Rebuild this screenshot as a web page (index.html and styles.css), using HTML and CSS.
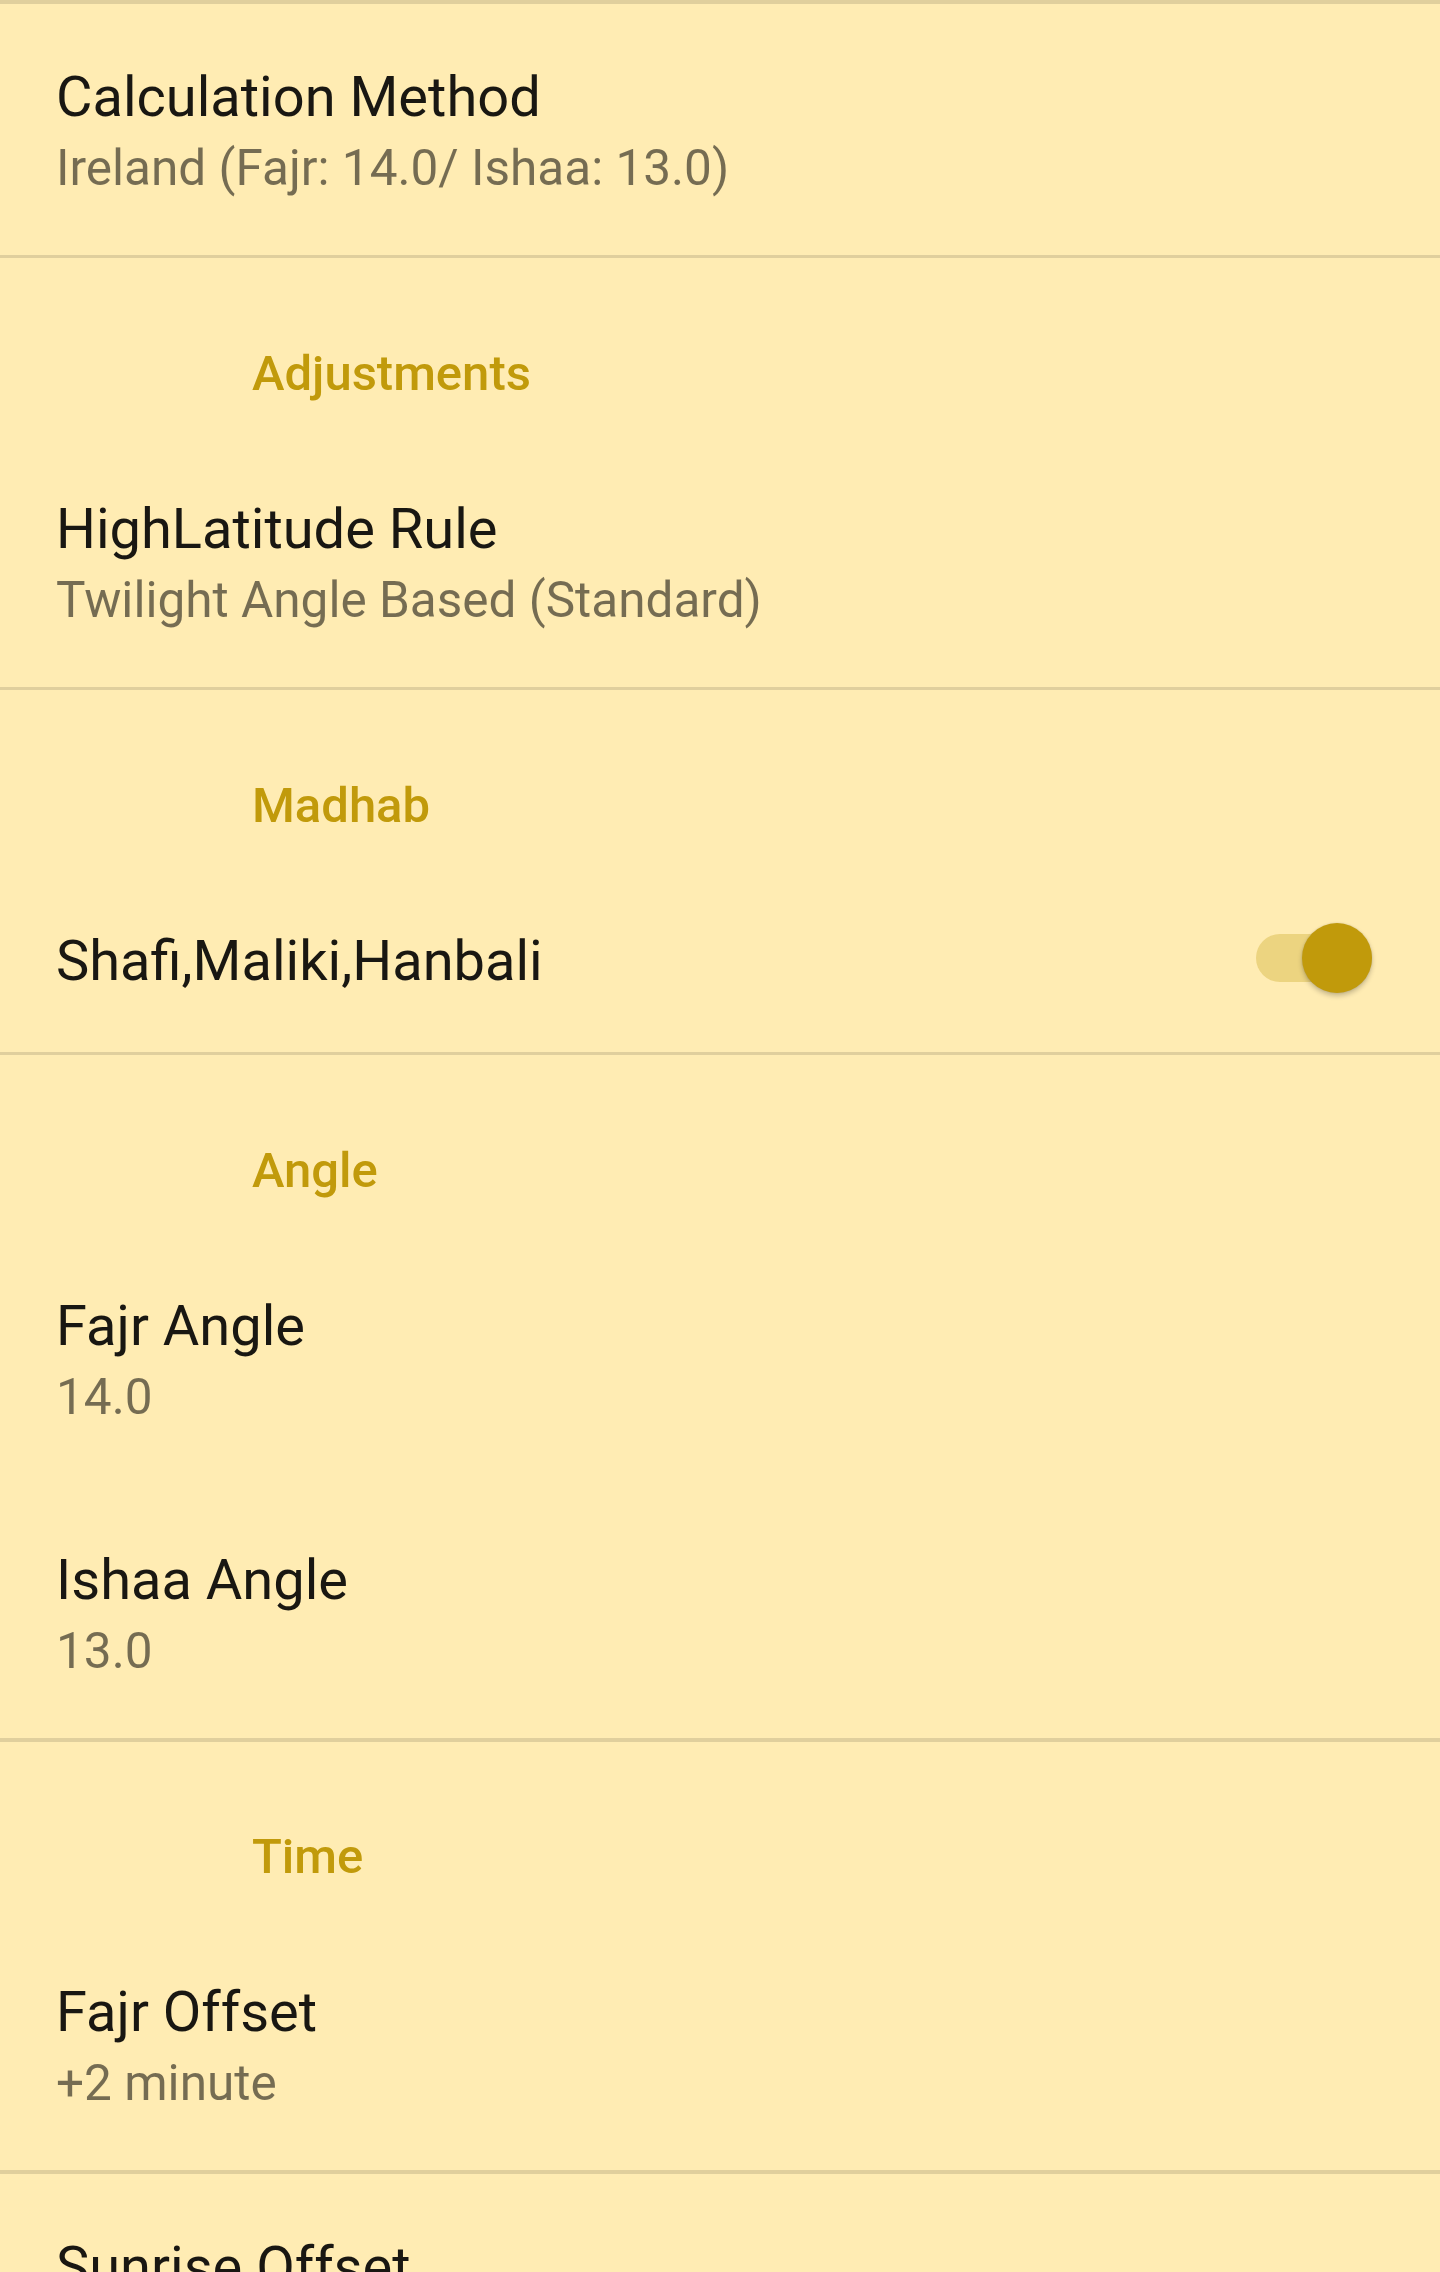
FILE: index.html
```html
<!DOCTYPE html>
<html lang="en">
<head>
<meta charset="utf-8">
<title>Prayer Settings</title>
<link rel="stylesheet" href="styles.css">
</head>
<body>
<main class="prefs">
  <div class="divider"></div>

  <div class="item">
    <div class="text">
      <div class="title">Calculation Method</div>
      <div class="summary">Ireland (Fajr: 14.0/ Ishaa: 13.0)</div>
    </div>
  </div>
  <div class="divider"></div>

  <div class="category">Adjustments</div>
  <div class="item">
    <div class="text">
      <div class="title">HighLatitude Rule</div>
      <div class="summary">Twilight Angle Based (Standard)</div>
    </div>
  </div>
  <div class="divider"></div>

  <div class="category">Madhab</div>
  <div class="item">
    <div class="text">
      <div class="title">Shafi,Maliki,Hanbali</div>
    </div>
    <div class="switch" role="switch" aria-checked="true">
      <span class="track"></span>
      <span class="thumb"></span>
    </div>
  </div>
  <div class="divider"></div>

  <div class="category">Angle</div>
  <div class="item">
    <div class="text">
      <div class="title">Fajr Angle</div>
      <div class="summary">14.0</div>
    </div>
  </div>
  <div class="divider divider-hidden"></div>
  <div class="item">
    <div class="text">
      <div class="title">Ishaa Angle</div>
      <div class="summary">13.0</div>
    </div>
  </div>
  <div class="divider"></div>

  <div class="category">Time</div>
  <div class="item">
    <div class="text">
      <div class="title">Fajr Offset</div>
      <div class="summary">+2 minute</div>
    </div>
  </div>
  <div class="divider"></div>

  <div class="item">
    <div class="text">
      <div class="title">Sunrise Offset</div>
    </div>
  </div>
</main>
</body>
</html>
```
FILE: styles.css
```css
html, body {
  margin: 0;
  padding: 0;
  background: #FFECB3;
}

body {
  font-family: Roboto, "Noto Sans", "Liberation Sans", sans-serif;
  width: 1440px;
  height: 2272px;
  overflow: hidden;
}

.prefs {
  display: flex;
  flex-direction: column;
}

.divider {
  height: 3.5px;
  background: rgba(0, 0, 0, 0.12);
  flex: none;
}

.divider-hidden {
  background: transparent;
}

.item {
  display: flex;
  align-items: center;
  padding: 56px 0 54px 56px;
}

.text {
  display: flex;
  flex-direction: column;
  flex: 1;
  min-width: 0;
}

.title {
  font-size: 56px;
  line-height: 74px;
  font-weight: 400;
  color: rgba(0, 0, 0, 0.9);
  white-space: nowrap;
}

.summary {
  margin-top: 2px;
  font-size: 49.5px;
  line-height: 65px;
  font-weight: 400;
  color: rgba(0, 0, 0, 0.54);
  white-space: nowrap;
}

.category {
  padding: 86.5px 0 34px 252px;
  font-size: 49px;
  line-height: 57px;
  font-weight: 500;
  color: #C19A0B;
}

.switch {
  position: relative;
  flex: none;
  width: 116px;
  height: 70px;
  margin: -3px 68px 3px 0;
}

.track {
  position: absolute;
  left: 0;
  top: 11px;
  width: 116px;
  height: 48px;
  border-radius: 24px;
  background: rgba(193, 154, 11, 0.3);
}

.thumb {
  position: absolute;
  right: 0;
  top: 0;
  width: 70px;
  height: 70px;
  border-radius: 50%;
  background: #C19A0B;
  box-shadow: 0 3px 5px rgba(0, 0, 0, 0.22), 0 0 2px rgba(0, 0, 0, 0.12);
}
```
